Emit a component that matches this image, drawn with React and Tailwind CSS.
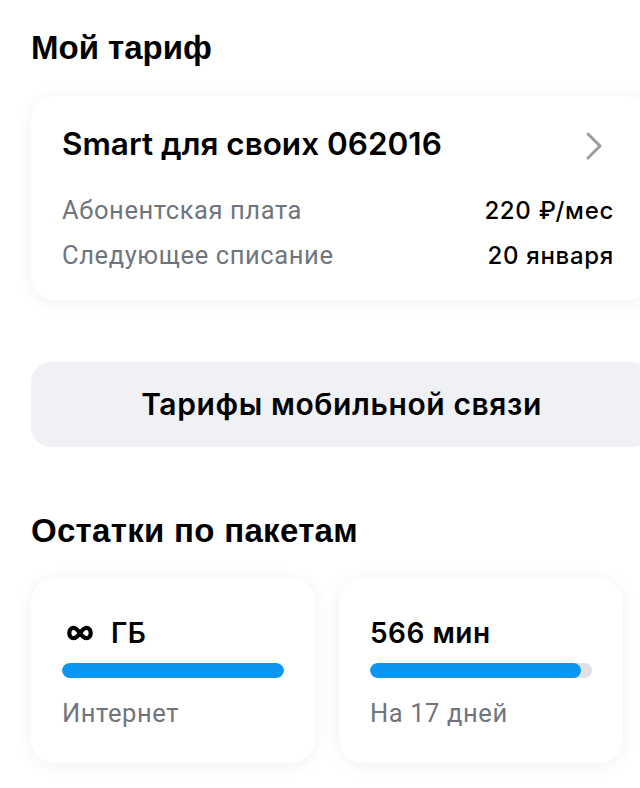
import React from 'react'

const head = { fontFamily: '"Liberation Sans", Arial, sans-serif' }
const inter = { fontFamily: 'Inter, "Noto Sans", sans-serif' }
const roboto = { fontFamily: 'Roboto, "Noto Sans", sans-serif' }

function Chevron() {
  return (
    <svg width="20" height="30" viewBox="0 0 20 30" fill="none">
      <path d="M4 3 L16 15 L4 27" stroke="#9a9da3" strokeWidth="3" strokeLinecap="round" strokeLinejoin="round" />
    </svg>
  )
}

function InfinityIcon() {
  return (
    <svg width="26" height="16" viewBox="0 0 26 16" fill="none">
      <path
        d="M13 8 C10 3.8 8.2 2.8 6.6 2.8 C4 2.8 2.3 5 2.3 8 C2.3 11 4 13.2 6.6 13.2 C8.2 13.2 10 12.2 13 8 C16 3.8 17.8 2.8 19.4 2.8 C22 2.8 23.7 5 23.7 8 C23.7 11 22 13.2 19.4 13.2 C17.8 13.2 16 12.2 13 8 Z"
        stroke="#000"
        strokeWidth="4.2"
      />
    </svg>
  )
}

function Row({ label, value }) {
  return (
    <div className="flex items-baseline justify-between h-[32px]">
      <span className="text-[25.5px] leading-[32px] tracking-[0.6px] text-[#70757d]" style={roboto}>{label}</span>
      <span className="text-[24px] leading-[32px] tracking-[0.7px] font-medium text-black" style={inter}>{value}</span>
    </div>
  )
}

function Packet({ value, icon, label, fill }) {
  return (
    <div className="w-[284px] h-[185px] shrink-0 rounded-[24px] bg-white shadow-[0_2px_18px_rgba(0,0,0,0.06)] px-[31px] pt-[39px]">
      <div className="flex items-center h-[32px]">
        {icon && <span className="ml-[5px] mr-[18px] flex">{icon}</span>}
        <span className="text-[28px] leading-[32px] tracking-[0.5px] font-semibold text-black" style={inter}>{value}</span>
      </div>
      <div className="mt-[14px] h-[15px] rounded-full bg-[#dfe1e6] overflow-hidden">
        <div className="h-full rounded-full bg-[#0b96f2]" style={{ width: fill }} />
      </div>
      <div className="mt-[19px] text-[25.5px] leading-[32px] tracking-[0.6px] text-[#70757d]" style={roboto}>{label}</div>
    </div>
  )
}

export default function App() {
  return (
    <div className="w-[640px] h-[788px] overflow-hidden bg-white pl-[31px]">
      <h1 className="pt-[28px] text-[33px] leading-[40px] font-bold text-black" style={head}>Мой тариф</h1>

      <div className="mt-[28px] w-[621px] rounded-[24px] bg-white shadow-[0_2px_18px_rgba(0,0,0,0.06)] pl-[31px] pr-[38px] pt-[28px] pb-[29px]">
        <div className="flex items-center justify-between h-[40px]">
          <span className="text-[31.5px] leading-[40px] font-semibold text-black" style={inter}>Smart для своих 062016</span>
          <span className="mr-[10px] mt-[4px]"><Chevron /></span>
        </div>
        <div className="mt-[30px] flex flex-col gap-[13px]">
          <Row label="Абонентская плата" value="220 ₽/мес" />
          <Row label="Следующее списание" value="20 января" />
        </div>
      </div>

      <div className="mt-[62px] w-[621px] h-[85px] rounded-[20px] bg-[#f0f1f5] flex items-center justify-center">
        <span className="text-[30px] tracking-[0.6px] font-semibold text-black" style={inter}>Тарифы мобильной связи</span>
      </div>

      <h2 className="mt-[66px] text-[33px] leading-[36px] tracking-[0.3px] font-bold text-black" style={head}>Остатки по пакетам</h2>

      <div className="mt-[29px] flex gap-[24px]">
        <Packet icon={<InfinityIcon />} value="ГБ" label="Интернет" fill="100%" />
        <Packet value="566 мин" label="На 17 дней" fill="95%" />
      </div>
    </div>
  )
}
